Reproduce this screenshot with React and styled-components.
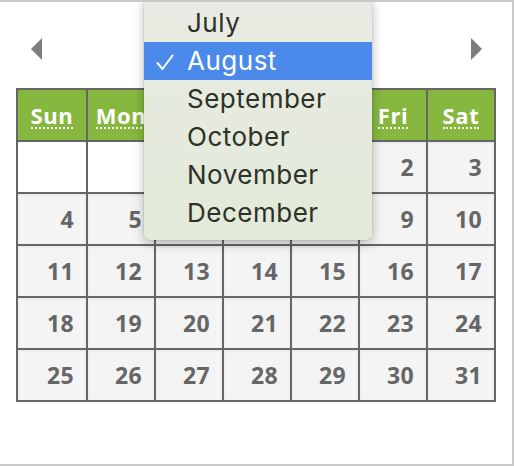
import React from 'react';
import styled, { createGlobalStyle } from 'styled-components';

const GlobalStyle = createGlobalStyle`
  html, body {
    margin: 0;
    padding: 0;
    background: #ffffff;
  }
  body {
    font-family: "Open Sans", "Liberation Sans", sans-serif;
  }
`;

const Frame = styled.div`
  position: relative;
  box-sizing: border-box;
  width: 514px;
  height: 466px;
  border: 2px solid #c9c9c9;
  border-left: none;
  background: #ffffff;
  overflow: hidden;
`;

const Nav = styled.div`
  display: flex;
  align-items: center;
  justify-content: space-between;
  height: 86px;
  padding: 0 30px 0 31px;
  box-sizing: border-box;
`;

const Arrow = styled.span`
  width: 0;
  height: 0;
  margin-top: 8px;
  border-top: 11px solid transparent;
  border-bottom: 11px solid transparent;
  ${({ $dir }) => $dir === 'left'
    ? 'border-right: 11px solid #7d7d7d;'
    : 'border-left: 11px solid #7d7d7d;'}
`;

const Grid = styled.div`
  display: grid;
  grid-template-columns: 68px repeat(6, 66px);
  grid-auto-rows: 50px;
  gap: 2px;
  width: max-content;
  margin-left: 16px;
  padding: 2px;
  background: #666666;
`;

const HeadCell = styled.div`
  display: flex;
  align-items: center;
  justify-content: center;
  background: #86b840;
`;

const Abbr = styled.abbr`
  color: #ffffff;
  font-weight: 700;
  font-size: 22px;
  letter-spacing: 0.6px;
  text-decoration: none;
  border-bottom: 2px dotted #ffffff;
  line-height: 22px;
  padding-bottom: 1px;
  margin-top: 2px;
`;

const DayCell = styled.div`
  display: flex;
  align-items: center;
  justify-content: flex-end;
  padding-right: 12px;
  background: ${({ $empty }) => ($empty ? '#ffffff' : '#f4f4f4')};
  box-shadow: ${({ $empty }) => ($empty ? 'none' : 'inset 0 1px 3px rgba(0, 0, 0, 0.06)')};
  color: #666666;
  font-weight: 700;
  font-size: 23px;
  letter-spacing: 0.3px;
`;

const Menu = styled.div`
  position: absolute;
  left: 144px;
  top: -2px;
  width: 228px;
  padding: 4px 0 8px;
  box-sizing: border-box;
  background: linear-gradient(#e8ebe3, #e3ead8);
  border-radius: 0 0 7px 7px;
  box-shadow: 0 3px 12px rgba(0, 0, 0, 0.28), 0 0 0 1px rgba(0, 0, 0, 0.06);
`;

const MenuItem = styled.div`
  position: relative;
  height: 38px;
  line-height: 38px;
  padding-left: 43px;
  font-family: "Inter", "Liberation Sans", sans-serif;
  font-size: 26px;
  letter-spacing: 0.5px;
  color: ${({ $active }) => ($active ? '#ffffff' : '#2d3128')};
  background: ${({ $active }) => ($active ? '#4b8aeb' : 'transparent')};
`;

const Check = styled.svg`
  position: absolute;
  left: 12px;
  top: 12px;
`;

const DAYS = ['Sun', 'Mon', 'Tue', 'Wed', 'Thu', 'Fri', 'Sat'];
const MONTHS = ['July', 'August', 'September', 'October', 'November', 'December'];

const cells = [
  ...Array(4).fill(null),
  ...Array.from({ length: 31 }, (_, i) => i + 1),
];

export default function App() {
  return (
    <>
      <GlobalStyle />
      <Frame>
        <Nav>
          <Arrow $dir="left" />
          <Arrow $dir="right" />
        </Nav>
        <Grid>
          {DAYS.map((d) => (
            <HeadCell key={d}>
              <Abbr title={d}>{d}</Abbr>
            </HeadCell>
          ))}
          {cells.map((n, i) => (
            <DayCell key={i} $empty={n === null}>{n}</DayCell>
          ))}
        </Grid>
        <Menu>
          {MONTHS.map((m) => (
            <MenuItem key={m} $active={m === 'August'}>
              {m === 'August' && (
                <Check width="18" height="17" viewBox="0 0 18 17">
                  <polyline points="1.5,9 6.5,15 16.5,1.5" fill="none" stroke="#ffffff" strokeWidth="2" strokeLinecap="round" strokeLinejoin="round" />
                </Check>
              )}
              {m}
            </MenuItem>
          ))}
        </Menu>
      </Frame>
    </>
  );
}
